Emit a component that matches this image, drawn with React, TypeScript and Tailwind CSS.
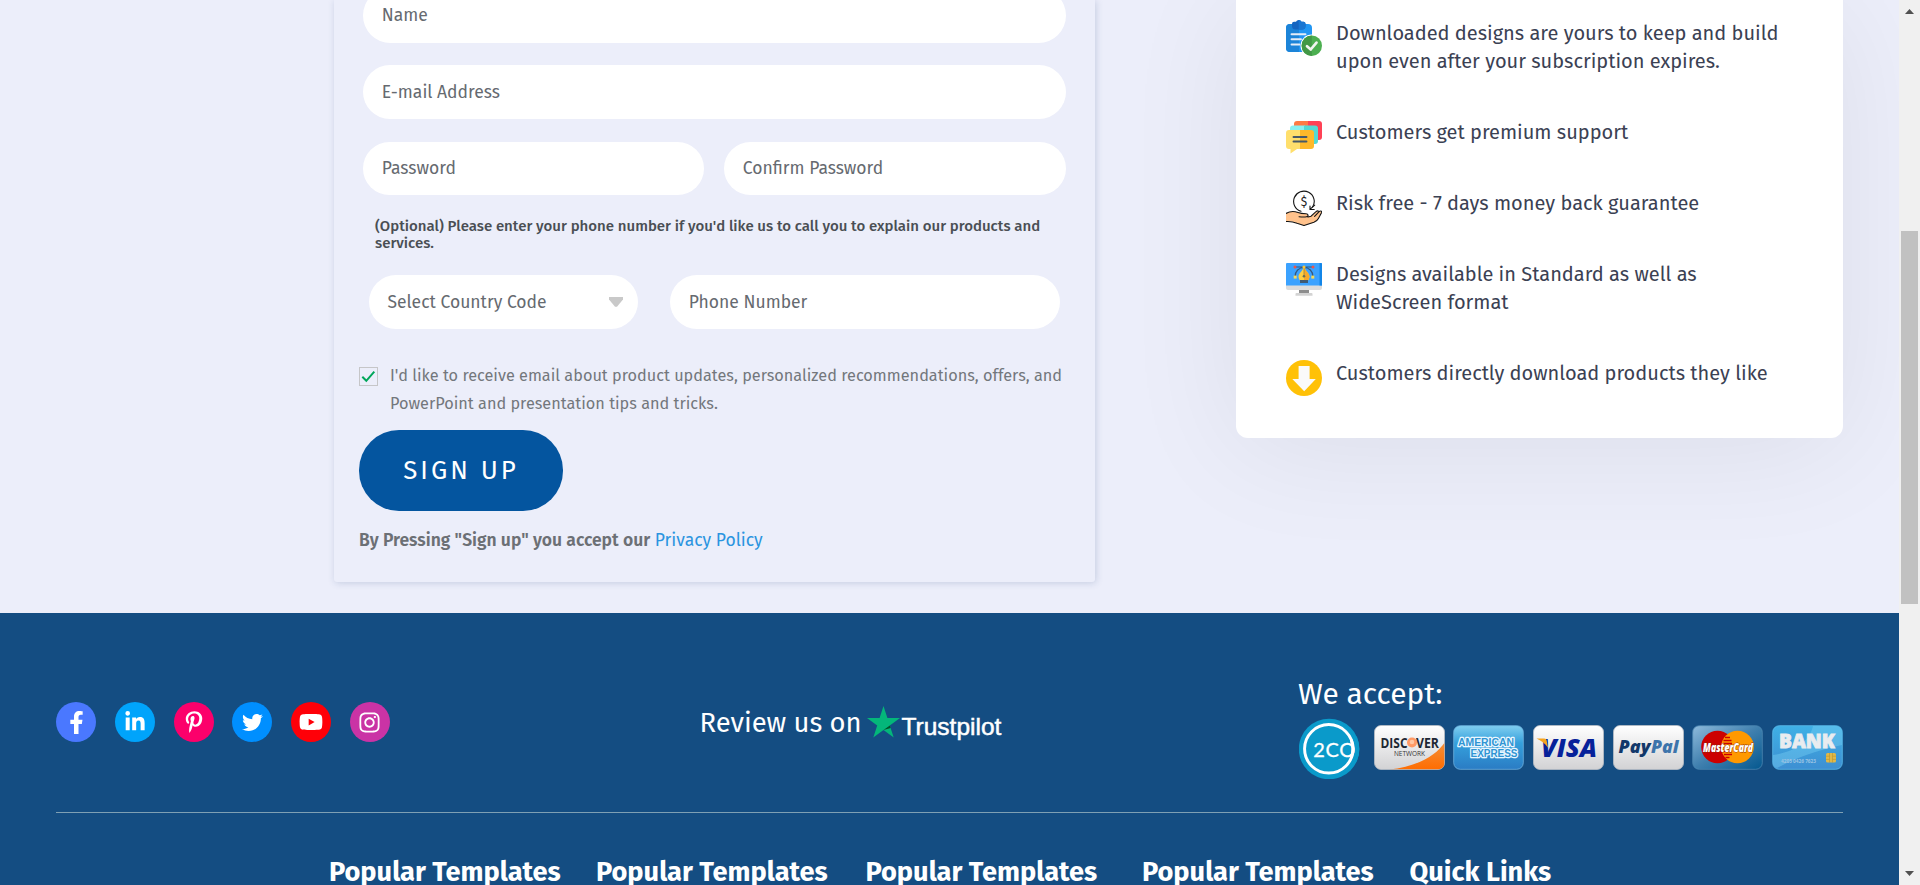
import React from "react";
import { FaFacebookF, FaLinkedinIn, FaPinterestP, FaTwitter, FaYoutube, FaInstagram } from "react-icons/fa";

function Field({ label, className }: { label: string; className: string }) {
  return (
    <div className={`flex items-center rounded-full bg-white pt-0.5 pl-[18.8px] text-[17.5px] text-[#666a70] ${className}`}>
      <span className="whitespace-nowrap">{label}</span>
    </div>
  );
}

function ClipboardIcon() {
  return (
    <svg width="36" height="36" viewBox="0 0 36 36" className="mt-px shrink-0">
      <rect x="0" y="4" width="26" height="28" rx="4" fill="#2196f3" />
      <path d="M4 4h9v28H4a4 4 0 0 1-4-4V8a4 4 0 0 1 4-4z" fill="#1c84d8" />
      <path d="M8 1.800h2A3 3 0 0 1 15.500 1.800h2A2 2 0 0 1 19.500 3.800V6a3.500 3.500 0 0 1-3.500 3.500H9.500A3.500 3.500 0 0 1 6 6V3.800A2 2 0 0 1 8 1.800z" fill="#1565c0" />
      <path d="M12.700 0A3 3 0 0 1 15.500 1.800h2A2 2 0 0 1 19.500 3.800V6A3.500 3.500 0 0 1 16 9.500h-3.300z" fill="#1976d2" />
      <g stroke="#e4edf7" strokeWidth="1.900" strokeLinecap="round">
        <path d="M5.500 14.200h14M5.500 19.300h9.500M5.500 24.500h8" />
      </g>
      <circle cx="25.800" cy="25.700" r="11.300" fill="#fff" />
      <circle cx="25.800" cy="25.700" r="10.200" fill="#4caf50" />
      <path d="M25.800 15.500a10.200 10.200 0 0 0 0 20.400z" fill="#429846" />
      <path d="M21 26.200l3.700 3.300L30.500 22.600" fill="none" stroke="#f1f4f1" strokeWidth="2.700" strokeLinecap="round" strokeLinejoin="round" />
    </svg>
  );
}

function ChatIcon() {
  return (
    <svg width="36" height="33" viewBox="0 0 36 33" className="mt-[3px] shrink-0">
      <path d="M11 0h12v14H8V3a3 3 0 0 1 3-3z" fill="#ff7a44" />
      <path d="M22 0h11a3 3 0 0 1 3 3v13a3 3 0 0 1-3 3H22z" fill="#ff4155" />
      <path d="M7 4.500h12V20H4V7.500a3 3 0 0 1 3-3z" fill="#8af0f0" />
      <path d="M18 4.500h11a3 3 0 0 1 3 3V20a3 3 0 0 1-3 3H18z" fill="#55d9d3" />
      <path d="M3 9h11v19H11l-6.500 4.500L4.500 28H3a3 3 0 0 1-3-3V12a3 3 0 0 1 3-3z" fill="#ffdf6c" />
      <path d="M14 9h11a3 3 0 0 1 3 3v13a3 3 0 0 1-3 3H14z" fill="#ffb92a" />
      <path d="M7.500 16h13M7.500 20.500h13" stroke="#475967" strokeWidth="1.900" strokeLinecap="round" />
    </svg>
  );
}

function MoneyHandIcon() {
  return (
    <svg width="36" height="36" viewBox="0 0 36 36" className="mt-px shrink-0">
      <path d="M0 23.500c3.500-2.200 8-2.600 12-1 2.500 1 5 1.200 8 1.200 2.500 0 2.800 2.600 1 3.100l4-.6 5-4.500c1.500-1.200 3.200-.8 2.600.6 1.500-1.600 3.600-1.600 3 .3l-3.200 6c-1 2-2.500 3-4.500 3.800L18 35.500 11 33.300C8 32 4 31 0 31.500z" fill="#ffc28c" />
      <g fill="none" stroke="#141414" strokeWidth="1.100" strokeLinecap="round">
        <path d="M15 21.300A10.300 10.300 0 1 1 26.600 17" />
        <path d="M24 16v3.500h4.200M24.200 19.200l4.500-4" />
        <path d="M0 23.500c3.500-2.200 8-2.600 12-1 2.500 1 5 1.200 8 1.200 2.500 0 2.800 2.800.5 3.100-2.500.4-5 .2-7.500-.1M22 27l3-.8 5-4.600c1.500-1.200 3.200-.8 2.600.6l-4 4.200M32.600 22.200c1.500-1.600 3.600-1.600 3 .3l-3.200 6c-1 2-2.500 3-4.500 3.800L18 35.500 11 33.300C8 32 4 31.200 0 31.500" />
      </g>
      <text x="18" y="15.500" textAnchor="middle" fontSize="12" fontFamily="'Fira Sans','Liberation Sans',sans-serif" fill="#222">$</text>
    </svg>
  );
}

function MonitorIcon() {
  return (
    <svg width="36" height="33" viewBox="0 0 36 33" className="mt-[3px] shrink-0">
      <path d="M13 27h10v3.500H13z" fill="#8d8d8d" />
      <path d="M10.500 30h15a1 1 0 0 1 1 1v1.800H9.500V31a1 1 0 0 1 1-1z" fill="#d3d3d3" />
      <path d="M0 22h36v3a2 2 0 0 1-2 2H2a2 2 0 0 1-2-2z" fill="#dcdcdc" />
      <path d="M1 0h34a1 1 0 0 1 1 1v21.500H0V1a1 1 0 0 1 1-1z" fill="#3ba2ff" />
      <path d="M33.500 0H35a1 1 0 0 1 1 1v21.500h-2.500z" fill="#1386e8" />
      <path d="M9 14c0-6 4-9.500 9-9.500S27 8 27 14M9 4h18" fill="none" stroke="#35587d" strokeWidth="1.200" />
      <path d="M18 3.500c1 4 5.500 7 5.500 10.200 0 1.500-1 3-1.700 4h-7.600c-.7-1-1.700-2.500-1.700-4C12.500 10.500 17 7.500 18 3.500z" fill="#ffcf43" />
      <path d="M18 3.500c1 4 5.500 7 5.500 10.200 0 1.500-1 3-1.700 4H18z" fill="#f6a92b" />
      <path d="M18 5v8" stroke="#8a7a40" strokeWidth=".7" />
      <circle cx="18" cy="13.200" r="1.300" fill="#6b6f55" />
      <rect x="14" y="17" width="8" height="3" fill="#405a73" />
      <rect x="7.700" y="12.600" width="3" height="3" fill="#f5d95c" />
      <rect x="25.300" y="12.600" width="3" height="3" fill="#f5d95c" />
      <circle cx="9" cy="4" r="1.500" fill="#ee5548" />
      <circle cx="27" cy="4" r="1.500" fill="#ee5548" />
      <circle cx="18" cy="4" r="1.600" fill="#f7c53c" />
    </svg>
  );
}

function DownloadIcon() {
  return (
    <svg width="36" height="36" viewBox="0 0 36 36" className="mt-px shrink-0">
      <circle cx="18" cy="18" r="18" fill="#ffc107" />
      <path d="M12.600 6h11v13h6.200L18.200 31.200 6.300 19h6.300z" fill="#fafafa" />
    </svg>
  );
}

const benefits = [
  { icon: <ClipboardIcon />, lines: ["Downloaded designs are yours to keep and build", "upon even after your subscription expires."] },
  { icon: <ChatIcon />, lines: ["Customers get premium support"] },
  { icon: <MoneyHandIcon />, lines: ["Risk free - 7 days money back guarantee"] },
  { icon: <MonitorIcon />, lines: ["Designs available in Standard as well as", "WideScreen format"] },
  { icon: <DownloadIcon />, lines: ["Customers directly download products they like"] },
];

function SignUpForm() {
  return (
    <div className="h-[582px] w-[761px] shrink-0 rounded-b-[3px] pl-[25px] shadow-[1px_1px_7px_rgba(60,85,140,0.22)]">
      <div className="ml-1 w-[703px]">
        <Field label="Name" className="-mt-3 h-[55px]" />
        <Field label="E-mail Address" className="mt-[22px] h-[54px]" />
        <div className="mt-[23px] flex gap-5">
          <Field label="Password" className="h-[53px] w-[341px]" />
          <Field label="Confirm Password" className="h-[53px] w-[342px]" />
        </div>
        <p className="mt-[23px] ml-3 text-[15px] leading-[17px] font-medium whitespace-nowrap text-[#4a4e54]">
          (Optional) Please enter your phone number if you'd like us to call you to explain our products and
          <br />
          services.
        </p>
        <div className="mt-[23px] ml-1.5 flex gap-8">
          <div className="flex h-[54px] w-[269px] items-center justify-between rounded-full bg-white pt-0.5 pr-[15px] pl-[18.5px] text-[17.5px] text-[#666a70]">
            <span>Select Country Code</span>
            <svg width="14" height="10" viewBox="0 0 14 10" className="-mt-0.5">
              <path d="M0 0h14v2.500L8 9.700H6L0 2.500z" fill="#c9c9c9" />
            </svg>
          </div>
          <Field label="Phone Number" className="h-[54px] w-[390px]" />
        </div>
      </div>
      <div className="mt-[33px] flex">
        <div className="mt-[5px] flex h-[19px] w-[19px] items-center justify-center border border-[#c6c6c8]">
          <svg width="15" height="13" viewBox="0 0 15 13">
            <path d="M1.300 6.800l4 4L13.300 1.700" fill="none" stroke="#00a65a" strokeWidth="2" />
          </svg>
        </div>
        <p className="ml-3 text-[16.27px] leading-7 whitespace-nowrap text-[#73777c]">
          I'd like to receive email about product updates, personalized recommendations, offers, and
          <br />
          PowerPoint and presentation tips and tricks.
        </p>
      </div>
      <button className="mt-3 block h-[81px] w-[204px] rounded-[40px] bg-[#04559f] pt-0.5 text-center text-[25.8px] tracking-[3px] text-white">
        SIGN UP
      </button>
      <p className="mt-[17px] text-[17.5px] leading-[26px] whitespace-nowrap">
        <span className="font-semibold text-[#6c7075]">By Pressing "Sign up" you accept our</span>{" "}
        <a className="text-[#2a94e0]">Privacy Policy</a>
      </p>
    </div>
  );
}

const socials = [
  { Icon: FaFacebookF, bg: "bg-[#4a78ff]", size: 23 },
  { Icon: FaLinkedinIn, bg: "bg-[#00a4fb]", size: 22 },
  { Icon: FaPinterestP, bg: "bg-[#fc006b]", size: 22 },
  { Icon: FaTwitter, bg: "bg-[#008fff]", size: 21 },
  { Icon: FaYoutube, bg: "bg-[#ff0008]", size: 24 },
  { Icon: FaInstagram, bg: "bg-[#ca33a5]", size: 23 },
];

const label = "'Open Sans','Liberation Sans',sans-serif";

function PaymentBadges() {
  return (
    <div className="flex items-start">
      <svg width="62" height="61" viewBox="0 0 62 61" className="mr-[14px]">
        <circle cx="30.800" cy="31" r="31" fill="#0a9aca" />
        <circle cx="30.500" cy="30.800" r="24.800" fill="none" stroke="#fff" strokeWidth="3" />
        <text x="14.500" y="38.700" fontSize="20.500" fontFamily="Lato,'Fira Sans',sans-serif" fill="#fff" stroke="#fff" strokeWidth=".3" textLength="43">2CO</text>
        <path d="M54 18h8v26h-8a24 24 0 0 0 0-26z" fill="#0a9aca" clipPath="url(#coin)" />
        <defs><clipPath id="coin"><circle cx="30.800" cy="31" r="31" /></clipPath></defs>
        <path d="M53.500 21.700a24.800 24.800 0 0 1 0 18.200" fill="none" stroke="#fff" strokeWidth="3" />
      </svg>
      <div className="mt-[7px] flex gap-[8.7px]">
        <svg width="71" height="45" viewBox="0 0 71 45">
          <defs>
            <linearGradient id="paper" x1="0" y1="0" x2="0" y2="1"><stop offset="0" stopColor="#fff" /><stop offset="1" stopColor="#d2d2d4" /></linearGradient>
            <linearGradient id="orange" x1="0" y1="0" x2="0" y2="1"><stop offset="0" stopColor="#f4903a" /><stop offset="1" stopColor="#ff6c00" /></linearGradient>
            <clipPath id="cardClip"><rect x=".7" y=".7" width="69.600" height="43.600" rx="6" /></clipPath>
          </defs>
          <rect x=".5" y=".5" width="70" height="44" rx="6.500" fill="url(#paper)" stroke="#b9bec5" strokeWidth=".8" />
          <path d="M15 44.500C42 42 62 31 71 17v28z" fill="url(#orange)" clipPath="url(#cardClip)" />
          <text x="6.500" y="22.500" fontSize="14.200" fontWeight="700" fontFamily={label} fill="#1d2733" textLength="27" lengthAdjust="spacingAndGlyphs">DISC</text>
          <circle cx="38" cy="17.500" r="5" fill="#ff9a66" /><circle cx="38" cy="17" r="2.300" fill="#ffc7a3" />
          <text x="42" y="22.500" fontSize="14.200" fontWeight="700" fontFamily={label} fill="#1d2733" textLength="23" lengthAdjust="spacingAndGlyphs">VER</text>
          <text x="20" y="30.500" fontSize="7" fontFamily={label} fill="#333" textLength="31" lengthAdjust="spacingAndGlyphs">NETWORK</text>
        </svg>
        <svg width="71" height="45" viewBox="0 0 71 45">
          <defs><linearGradient id="amex" x1="0" y1="0" x2="0" y2="1"><stop offset="0" stopColor="#80cef0" /><stop offset=".4" stopColor="#35a0dc" /><stop offset="1" stopColor="#2a7cc4" /></linearGradient></defs>
          <rect x=".7" y=".7" width="69.600" height="43.600" rx="6.500" fill="url(#amex)" stroke="#6eb2df" strokeWidth=".8" />
          <g fontFamily="'Liberation Sans',sans-serif" fontWeight="700" fontSize="11" fill="#2f94d3" stroke="#eaf7ff" strokeWidth="2.600" paintOrder="stroke" strokeLinejoin="round">
            <text x="5" y="21" textLength="56" lengthAdjust="spacingAndGlyphs">AMERICAN</text>
            <text x="17.500" y="32" textLength="47" lengthAdjust="spacingAndGlyphs">EXPRESS</text>
          </g>
        </svg>
        <svg width="71" height="45" viewBox="0 0 71 45">
          <rect x=".5" y=".5" width="70" height="44" rx="6.500" fill="url(#paper)" stroke="#b9bec5" strokeWidth=".8" />
          <text x="8" y="32" fontSize="25.500" fontWeight="800" fontStyle="italic" fontFamily={label} fill="#06219a" textLength="56" lengthAdjust="spacingAndGlyphs">VISA</text>
          <path d="M3.500 13.500h7.500c1.800 0 2.400.8 2.700 2.300l1.300 7C12.300 18.500 8 15.500 3.500 13.500z" fill="#f7a520" />
        </svg>
        <svg width="71" height="45" viewBox="0 0 71 45">
          <rect x=".5" y=".5" width="70" height="44" rx="6.500" fill="url(#paper)" stroke="#b9bec5" strokeWidth=".8" />
          <text x="5.500" y="27.500" fontSize="17.500" fontWeight="800" fontStyle="italic" fontFamily={label} fill="#12386a" textLength="32" lengthAdjust="spacingAndGlyphs">Pay</text>
          <text x="38" y="27.500" fontSize="17.500" fontWeight="800" fontStyle="italic" fontFamily={label} fill="#3d74ab" textLength="27.500" lengthAdjust="spacingAndGlyphs">Pal</text>
        </svg>
        <svg width="71" height="45" viewBox="0 0 71 45">
          <defs><linearGradient id="mc" x1="0" y1="0" x2="1" y2="1"><stop offset="0" stopColor="#8fbbdc" /><stop offset=".5" stopColor="#3f7fae" /><stop offset="1" stopColor="#04588f" /></linearGradient></defs>
          <rect x=".7" y=".7" width="69.600" height="43.600" rx="6.500" fill="url(#mc)" stroke="#4b86b1" strokeWidth=".8" />
          <circle cx="25.500" cy="22" r="16.300" fill="#cc0000" />
          <circle cx="45.500" cy="22" r="16.300" fill="#ff9900" />
          <path d="M33 12.500h5M31.500 15.500h8M31 18.500h9M31 26.500h9M32 29.500h8M33.500 32.500h4" stroke="#cc0000" strokeWidth="1.300" />
          <text x="11" y="26.800" fontSize="12" fontWeight="800" fontStyle="italic" fontFamily={label} fill="#fff" stroke="#8a2a10" strokeWidth=".8" paintOrder="stroke" textLength="50" lengthAdjust="spacingAndGlyphs">MasterCard</text>
        </svg>
        <svg width="71" height="45" viewBox="0 0 71 45">
          <defs><linearGradient id="bank" x1="0" y1="0" x2="0" y2="1"><stop offset="0" stopColor="#3fb0e6" /><stop offset="1" stopColor="#3d8fd2" /></linearGradient></defs>
          <rect x=".7" y=".7" width="69.600" height="43.600" rx="6.500" fill="url(#bank)" stroke="#5cbcec" strokeWidth=".8" />
          <path d="M1 30C24 27 38 15 41 1H64a6 6 0 0 1 6 6V20C50 24 25 32 5 43 2 42 1 40 1 38z" fill="#74cdf2" opacity=".45" />
          <text x="7" y="22.800" fontSize="19" fontWeight="800" fontFamily={label} fill="#e9ecef" stroke="#e9ecef" strokeWidth=".8" textLength="56" lengthAdjust="spacingAndGlyphs">BANK</text>
          <text x="9" y="38" fontSize="5.500" fontWeight="700" fontFamily={label} fill="#9dc4e4" textLength="35" lengthAdjust="spacingAndGlyphs">4205 0426 7623</text>
          <rect x="54" y="28" width="10" height="9.500" rx="1.500" fill="#e0b848" />
          <path d="M54 31.200h3.500M54 34.400h3.500M60.500 31.200H64M60.500 34.400H64M57.500 28v9.500M60.500 28v9.500" stroke="#b8932e" strokeWidth=".6" />
        </svg>
      </div>
    </div>
  );
}

function Footer() {
  return (
    <footer className="h-[272px] bg-[#144d82] px-14 text-white">
      <div className="flex h-[200px] items-start border-b border-[#7fa0b4]">
        <div className="mt-[89px] flex w-[643.5px] shrink-0 gap-[18.8px]">
          {socials.map(({ Icon, bg, size }, i) => (
            <span key={i} className={`flex h-10 w-10 items-center justify-center rounded-full ${bg}`}>
              <Icon size={size} />
            </span>
          ))}
        </div>
        <div className="mt-[90px] flex">
          <span className="w-[167px] text-[27.4px] leading-10 whitespace-nowrap">Review us on</span>
          <svg width="33" height="32" viewBox="0 0 33 32" className="mt-[3px]">
            <path d="M16.500 0l3.900 12H33l-10.200 7.400 3.900 12L16.500 24 6.300 31.400l3.900-12L0 12h12.600z" fill="#04b67a" />
            <path d="M23.700 22.100l-.9-2.700-6.300 4.600z" fill="#005128" />
          </svg>
          <span className="mt-2 ml-0.5 font-['Liberation_Sans',sans-serif] text-[24.5px] leading-8 [-webkit-text-stroke:0.5px_white]">
            Trustpilot
          </span>
        </div>
        <div className="mt-[61px] ml-auto w-[544px]">
          <h3 className="-ml-px text-[29.9px] leading-10 whitespace-nowrap">We accept:</h3>
          <div className="mt-1">
            <PaymentBadges />
          </div>
        </div>
      </div>
      <div className="mt-[39px] ml-[273px] flex h-[33px] text-[27.2px] leading-10 font-bold whitespace-nowrap">
        <h4 className="w-[267px]">Popular Templates</h4>
        <h4 className="w-[269.5px]">Popular Templates</h4>
        <h4 className="w-[276.5px]">Popular Templates</h4>
        <h4 className="w-[267.5px]">Popular Templates</h4>
        <h4>Quick Links</h4>
      </div>
    </footer>
  );
}

export default function App() {
  return (
    <div className="flex h-[885px] w-[1920px] overflow-hidden bg-[#eceefa] font-['Fira_Sans','Noto_Sans',sans-serif]">
      <div className="w-[1899px] overflow-hidden">
        <main className="flex h-[613px] items-start overflow-hidden pl-[334px]">
          <SignUpForm />
          <div className="ml-[141px] flex h-[438px] w-[607px] shrink-0 flex-col gap-[43px] rounded-b-xl bg-white pt-[19px] pl-[50px] shadow-[0_10px_120px_rgba(0,0,0,0.07)]">
            {benefits.map((b) => (
              <div key={b.lines[0]} className="flex items-start">
                <span className="flex h-7 w-9 items-start">{b.icon}</span>
                <p className="ml-[14px] text-[20px] leading-7 whitespace-nowrap text-[#3b4153]">
                  {b.lines.map((line) => (
                    <span key={line} className="block">{line}</span>
                  ))}
                </p>
              </div>
            ))}
          </div>
        </main>
        <Footer />
      </div>
      <div className="flex w-[21px] flex-col items-center bg-[#f0f0f0]">
        <svg width="9" height="5" viewBox="0 0 9 5" className="mt-[9px]">
          <path d="M4.500 0L9 5H0z" fill="#505050" />
        </svg>
        <div className="mt-[217px] h-[373px] w-[17px] bg-[#c1c1c1]" />
        <svg width="9" height="5" viewBox="0 0 9 5" className="mt-auto mb-[9px]">
          <path d="M0 0h9L4.500 5z" fill="#505050" />
        </svg>
      </div>
    </div>
  );
}
